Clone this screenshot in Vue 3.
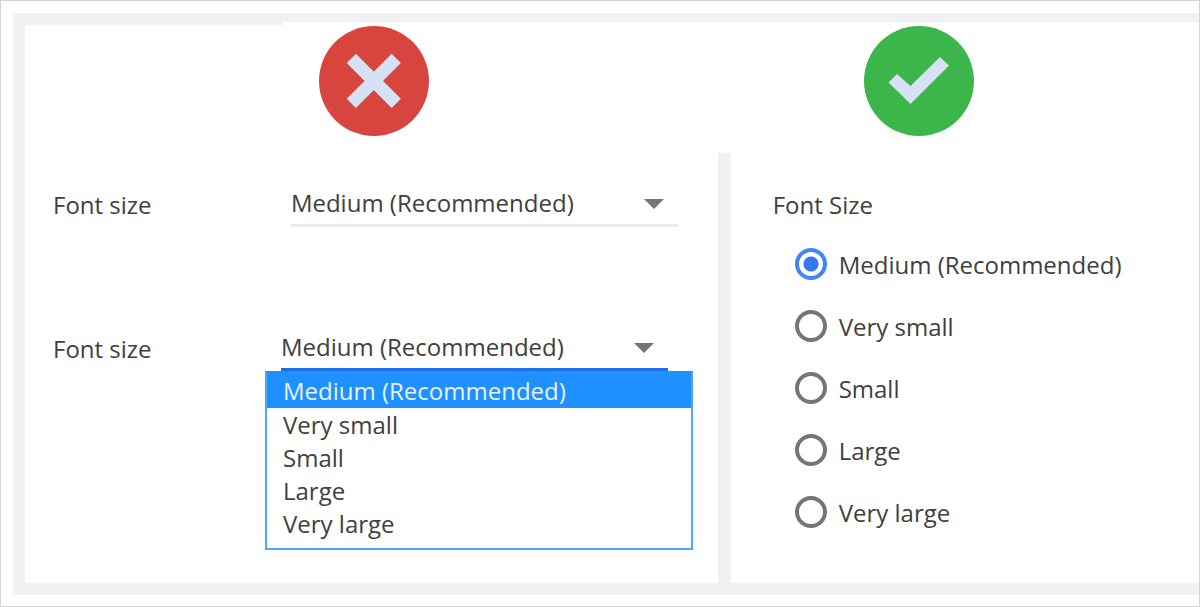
<template>
  <div class="page">
    <main class="board">
      <header class="verdicts">
        <div class="verdict bad">
          <svg class="badge" viewBox="0 0 110 110" role="img" aria-label="Don't">
            <circle cx="55" cy="55" r="55" fill="#d8453e" />
            <path d="M32.3 32.3 L77.3 77.3 M77.3 32.3 L32.3 77.3" stroke="#d6e2f3" stroke-width="13" />
          </svg>
        </div>
        <div class="verdict good">
          <svg class="badge" viewBox="0 0 110 110" role="img" aria-label="Do">
            <circle cx="55" cy="55" r="55" fill="#3cb54a" />
            <path d="M24.5 56.5 L33 48 L46.5 60 L76 31 L85 39.5 L46.5 78 Z" fill="#d6e2f3" />
          </svg>
        </div>
      </header>

      <div class="panes">
        <section class="pane pane-left">
          <div class="field closed">
            <label for="size-closed">Font size</label>
            <div class="select-box">
              <select id="size-closed" v-model="closedSize">
                <option v-for="size in sizes" :key="size" :value="size">{{ size }}</option>
              </select>
              <svg class="arrow" viewBox="0 0 20 10"><path d="M0 0 H20 L10 10 Z" fill="#757575" /></svg>
            </div>
          </div>

          <div class="field open">
            <label for="size-open">Font size</label>
            <div class="select-box">
              <select id="size-open" v-model="openSize">
                <option v-for="size in sizes" :key="size" :value="size">{{ size }}</option>
              </select>
              <svg class="arrow" viewBox="0 0 20 10"><path d="M0 0 H20 L10 10 Z" fill="#757575" /></svg>
              <ul class="menu" role="listbox" aria-label="Font size">
                <li
                  v-for="size in sizes"
                  :key="size"
                  role="option"
                  :aria-selected="size === openSize"
                  :class="{ active: size === openSize }"
                  @click="openSize = size"
                >{{ size }}</li>
              </ul>
            </div>
          </div>
        </section>

        <fieldset class="pane pane-right">
          <legend>Font Size</legend>
          <div class="radios">
            <label v-for="size in sizes" :key="size" class="radio">
              <input type="radio" name="font-size" :value="size" v-model="radioSize">
              <span>{{ size }}</span>
            </label>
          </div>
        </fieldset>
      </div>
    </main>
  </div>
</template>

<script setup>
import { ref } from 'vue';

const sizes = ['Medium (Recommended)', 'Very small', 'Small', 'Large', 'Very large'];

const closedSize = ref(sizes[0]);
const openSize = ref(sizes[0]);
const radioSize = ref(sizes[0]);
</script>

<style>
body {
  margin: 0;
  background: #fff;
}
</style>

<style scoped>
.page {
  box-sizing: border-box;
  display: flex;
  min-height: 100vh;
  padding: 12px 0 11px 12px;
  border: 1px solid #d4d4d4;
  font-family: "Open Sans", "Noto Sans", sans-serif;
  font-size: 24px;
  line-height: 34px;
  color: #404040;
}

.board {
  flex: 1;
  display: flex;
  flex-direction: column;
  border: 12px solid #f1f1f1;
  border-top-width: 9px;
  border-right: none;
}

/* the top band is a little thicker at its left end */
.verdicts {
  display: flex;
  padding-top: 4px;
  height: 127px;
  background: linear-gradient(#f1f1f1, #f1f1f1) no-repeat 0 0 / 258px 3px;
}

.verdict {
  box-sizing: border-box;
}

.bad {
  width: 59%;
  padding-left: 294px;
}

.good {
  flex: 1;
  padding-left: 146px;
}

.badge {
  display: block;
  width: 110px;
  height: 110px;
}

.panes {
  flex: 1;
  display: flex;
}

.pane {
  box-sizing: border-box;
}

.pane-left {
  width: 59%;
  padding: 30px 40px 0 28px;
}

.field {
  display: flex;
  align-items: center;
}

.closed {
  margin-bottom: 100px;
}

.closed label {
  width: 238px;
}

.open label {
  width: 228px;
}

.select-box {
  position: relative;
  width: 387px;
}

select {
  appearance: none;
  display: block;
  width: 100%;
  height: 44px;
  padding: 0 0 2px;
  border: none;
  border-bottom: 3px solid #ebebeb;
  background: transparent;
  font: inherit;
  color: inherit;
  outline: none;
}

.open select {
  border-bottom-color: #1b72e8;
}

.arrow {
  position: absolute;
  top: 16px;
  right: 14px;
  width: 20px;
  height: 10px;
  pointer-events: none;
}

.menu {
  position: absolute;
  top: 100%;
  left: -16px;
  box-sizing: border-box;
  width: 428px;
  margin: 0;
  padding: 0 0 8px;
  border: 2px solid #4ba6ff;
  border-top-color: #1e90ff;
  background: #fff;
  list-style: none;
}

.menu li {
  padding: 0 16px;
  line-height: 33px;
  cursor: pointer;
}

.menu li.active {
  padding-top: 1px;
  padding-bottom: 1px;
  background: #1e90ff;
  color: #e8f3ff;
}

.pane-right {
  flex: 1;
  min-width: 0;
  margin: 0;
  padding: 35px 0 0 42px;
  border: none;
  border-left: 13px solid #f1f1f1;
}

legend {
  float: left;
  padding: 0;
}

.radios {
  clear: both;
  display: flex;
  flex-direction: column;
  gap: 30px;
  padding: 26px 0 0 22px;
}

.radio {
  display: flex;
  align-items: center;
  gap: 12px;
  height: 32px;
  cursor: pointer;
}

.radio span {
  padding-top: 2px;
}

.radio input {
  appearance: none;
  flex: none;
  width: 32px;
  height: 32px;
  margin: 0;
  border: 4px solid #757575;
  border-radius: 50%;
  background: #fff;
  outline: none;
}

.radio input:checked {
  border-color: #4285f4;
  background: radial-gradient(circle, #3478f0 7px, #fff 8px);
}
</style>
